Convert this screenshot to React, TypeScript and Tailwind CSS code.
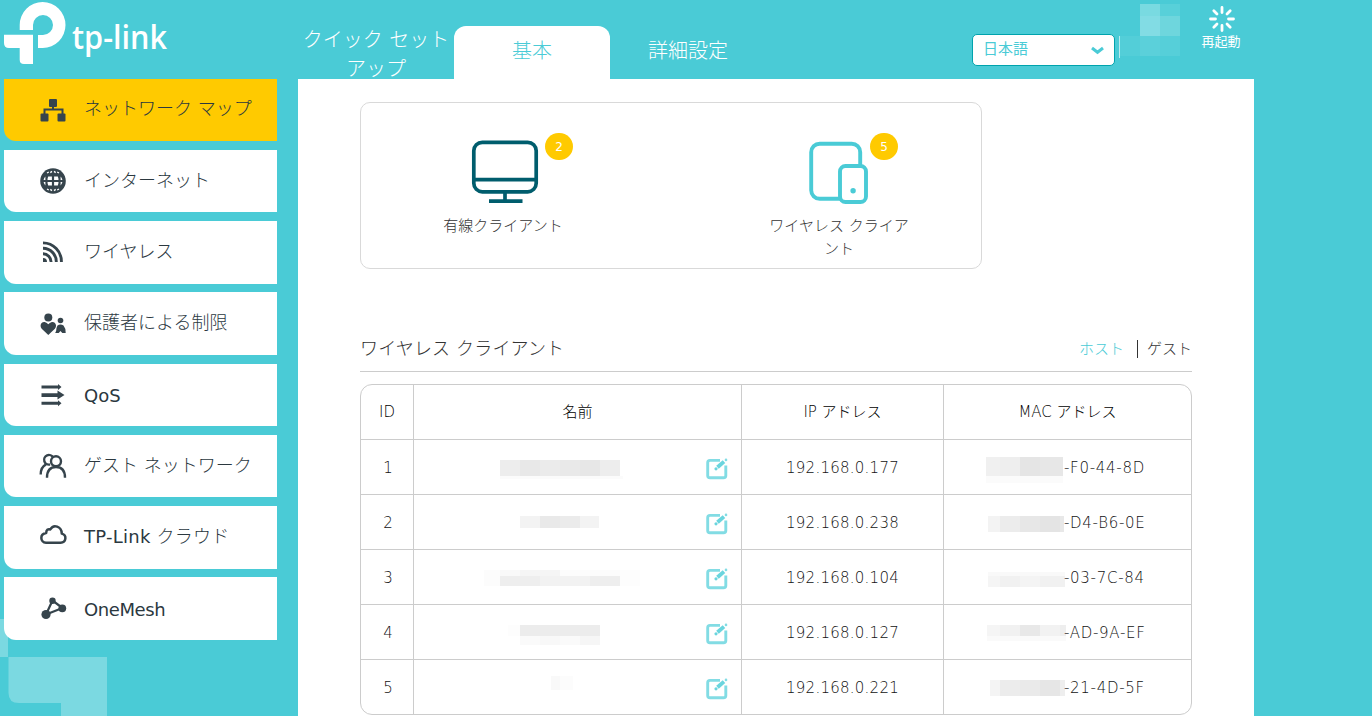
import type { ReactNode } from "react";

type Block = [x: number, y: number, w: number, h: number, fill: string];

const INK = "#36444c";

function Logo() {
  return (
    <svg width="200" height="79" viewBox="0 0 200 79" fill="#fff" className="overflow-visible" role="img" aria-label="tp-link">
      <path d="M19.700 30V25A22.900 23 0 1 1 42.700 48H38V35H43A10 10 0 1 0 33 25V30Z" />
      <path d="M4 34.700H33V64H24Q19.700 64 19.700 59.700V48H9Q4 48 4 43Z" />
      <text x="72" y="48.700" fontFamily="'Open Sans', sans-serif" fontWeight="600" fontSize="33" textLength="95" lengthAdjust="spacingAndGlyphs">
        tp-link
      </text>
    </svg>
  );
}

function MapIcon() {
  return (
    <svg width="28" height="28" viewBox="0 0 28 28" fill={INK}>
      <rect x="10" y="3" width="8" height="8" rx="1" />
      <rect x="1.500" y="17.500" width="8" height="8" rx="1" />
      <rect x="18.500" y="17.500" width="8" height="8" rx="1" />
      <path d="M5.500 18V13.500H23.500V18M14 10V14" fill="none" stroke={INK} strokeWidth="2" />
    </svg>
  );
}

function GlobeIcon() {
  return (
    <svg width="28" height="28" viewBox="0 0 28 28">
      <circle cx="14" cy="14" r="12.800" fill={INK} />
      <g fill="#fff">
        <path d="M12.900 9.600H9.200Q8.400 11.500 8.500 13H12.900ZM15.100 9.600H18.800Q19.600 11.500 19.500 13H15.100ZM12.900 18.400H9.200Q8.400 16.500 8.500 15H12.900ZM15.100 18.400H18.800Q19.600 16.500 19.500 15H15.100Z" />
        <path d="M6.400 9.600Q5 11 4.600 13H6.400ZM21.600 9.600Q23 11 23.400 13H21.600ZM6.400 18.400Q5 17 4.600 15H6.400ZM21.600 18.400Q23 17 23.400 15H21.600Z" />
        <path d="M8 6L9.800 5M11.300 5.600L13 4.400M15 4.400L16.700 5.600M18.200 5L20 6M8 22L9.800 23M11.300 22.400L13 23.600M15 23.600L16.700 22.400M18.200 23L20 22" fill="none" stroke="#fff" strokeWidth="1.300" />
      </g>
    </svg>
  );
}

function SignalIcon() {
  return (
    <svg width="28" height="28" viewBox="0 1.500 28 28" fill="none" stroke={INK} strokeWidth="2.900">
      <path d="M4 5.400A18.600 18.600 0 0 1 22.400 24.500M4 10.800A13.400 13.400 0 0 1 17.300 24.500M4 16.200A8.200 8.200 0 0 1 12.100 24.500" />
      <path d="M4 20.500A4 4 0 0 1 8 24.500H4Z" fill={INK} stroke="none" />
    </svg>
  );
}

function FamilyIcon() {
  return (
    <svg width="28" height="28" viewBox="0 -0.500 28 28" fill={INK}>
      <circle cx="9.300" cy="7" r="4" />
      <path d="M9.300 24.500L2.700 18.200C-.2 14.400 3 10.600 6.300 11.700Q7.800 12.200 9.300 13.700Q10.800 12.200 12.300 11.700C15.600 10.600 18.800 14.400 15.900 18.200Z" />
      <circle cx="21.500" cy="10" r="2.800" />
      <path d="M18.500 15Q21.500 12.800 24.500 15Q27 18 26.700 22.500H23.300L21.500 20.500L19.700 22.500H16.200Q17.500 20 17.500 17.500Z" />
    </svg>
  );
}

function QosIcon() {
  return (
    <svg width="28" height="28" viewBox="0 0 28 28" fill={INK}>
      <path d="M2.500 4.500H19V3L22.500 6L19 9V7.500H2.500Z" />
      <path d="M2.500 12.200H18.500V9.500L25.500 14L18.500 18.500V16H2.500Z" />
      <path d="M2.500 20.800H19V19.300L22.500 22.300L19 25.300V23.800H2.500Z" />
    </svg>
  );
}

function GuestIcon() {
  return (
    <svg width="28" height="28" viewBox="0 0 28 28" fill="none" stroke={INK} strokeWidth="2.400">
      <path d="M11 12.500A4.800 4.800 0 1 1 14.200 5.600" />
      <path d="M1.700 22.500Q1.700 15.200 7 12.400" />
      <circle cx="17" cy="9.300" r="5" />
      <path d="M8 25.700Q8 15 17 15Q26 15 26 25.700" />
    </svg>
  );
}

function CloudIcon() {
  return (
    <svg width="28" height="28" viewBox="0 3.500 28 28" className="overflow-visible" fill="none" stroke={INK} strokeWidth="2.500" strokeLinejoin="round">
      <path d="M7 22.300H21.500C27.500 22 28 14.500 22.800 13.100C22.500 5.800 14.500 3.200 11.300 9C9 8 7.200 9.700 7.200 12.400C.5 13.200 1 22 7 22.300Z" />
    </svg>
  );
}

function MeshIcon() {
  return (
    <svg width="28" height="28" viewBox="0 0.500 28 28" fill={INK}>
      <path d="M7 20L13.500 6L23.500 13.500Z" fill="none" stroke={INK} strokeWidth="2.200" />
      <circle cx="7" cy="20" r="4.600" />
      <circle cx="13.500" cy="6.200" r="3.200" />
      <circle cx="23.300" cy="13.800" r="3.900" />
    </svg>
  );
}

function MonitorIcon() {
  return (
    <svg width="68" height="64" viewBox="0 0 68 64" fill="none" stroke="#005d6d" strokeWidth="3.700">
      <rect x="2.800" y="2.300" width="62.400" height="49.500" rx="8.500" />
      <path d="M3 39.700H65M34 52V61M18 61.200H51.500" />
    </svg>
  );
}

function DevicesIcon() {
  return (
    <svg width="60" height="64" viewBox="0 0 60 64" fill="none" stroke="#4acbd6" strokeWidth="3.900">
      <rect x="2.200" y="3.700" width="49" height="55.100" rx="8.500" />
      <rect x="31" y="26" width="26" height="36" rx="5.500" fill="#fff" />
      <circle cx="44.100" cy="50.700" r="2.700" fill="#4acbd6" stroke="none" />
    </svg>
  );
}

function EditIcon() {
  return (
    <svg width="22" height="22" viewBox="0 0 22 22" fill="none" stroke="#82dce4" strokeWidth="2.900">
      <path d="M14 2.400H4Q1.700 2.400 1.700 4.700V17.500Q1.700 19.800 4 19.800H17.500Q19.800 19.800 19.800 17.500V7.500" />
      <path d="M11.500 9.300L18 3.600" stroke="#6ad5de" strokeWidth="3.900" />
      <circle cx="10" cy="10.800" r="1.600" fill="#6ad5de" stroke="none" />
      <circle cx="20" cy="1.900" r="1.300" fill="#82dce4" stroke="none" />
    </svg>
  );
}

function Blocks({ blocks, width, height }: { blocks: Block[]; width: number; height: number }) {
  return (
    <svg width={width} height={height} className="shrink-0" shapeRendering="crispEdges">
      {blocks.map(([x, y, w, h, fill], i) => (
        <rect key={i} x={x} y={y} width={w} height={h} fill={fill} />
      ))}
    </svg>
  );
}

interface NavItem {
  latin?: string;
  label?: string;
  icon: ReactNode;
  box: string;
  text: string;
}

const navItems: NavItem[] = [
  { label: "ネットワーク マップ", icon: <MapIcon />, box: "h-[62px] mb-[9px] bg-[#ffca00]", text: "pb-[3px]" },
  { label: "インターネット", icon: <GlobeIcon />, box: "h-[62px] mb-[9px] bg-white", text: "pb-[1px]" },
  { label: "ワイヤレス", icon: <SignalIcon />, box: "h-[63px] mb-[8px] bg-white", text: "pb-[2px]" },
  { label: "保護者による制限", icon: <FamilyIcon />, box: "h-[63px] mb-[9px] bg-white", text: "pb-[2px]" },
  { latin: "QoS", icon: <QosIcon />, box: "h-[62px] mb-[9px] bg-white", text: "pt-[1px]" },
  { label: "ゲスト ネットワーク", icon: <GuestIcon />, box: "h-[62px] mb-[9px] bg-white", text: "pb-[1px]" },
  { latin: "TP-Link", label: " クラウド", icon: <CloudIcon />, box: "h-[63px] mb-[8px] bg-white", text: "pb-[3px] tracking-[0.25px]" },
  { latin: "OneMesh", icon: <MeshIcon />, box: "h-[63px] bg-white", text: "pt-[1px] tracking-[-0.4px]" },
];

interface Client {
  id: number;
  ip: string;
  mac: string;
  name: Block[];
  prefix: Block[];
}

const clients: Client[] = [
  {
    id: 1,
    ip: "192.168.0.177",
    mac: "-F0-44-8D",
    name: [
      [86, 20, 20, 16, "#ededed"], [106, 20, 20, 16, "#e8e8e8"], [126, 20, 20, 16, "#ebebeb"],
      [146, 20, 20, 16, "#e9e9e9"], [166, 20, 20, 16, "#e7e7e7"], [186, 20, 20, 16, "#ededed"],
      [86, 36, 123, 3, "#fbfbfb"],
    ],
    prefix: [
      [0, 17, 14, 19, "#f0f0f0"], [14, 17, 20, 19, "#eeeeee"], [34, 17, 20, 19, "#e5e5e5"],
      [54, 17, 23, 19, "#e7e7e7"], [0, 36, 77, 7, "#fbfbfb"],
    ],
  },
  {
    id: 2,
    ip: "192.168.0.238",
    mac: "-D4-B6-0E",
    name: [[106, 21, 20, 12, "#f3f3f3"], [126, 21, 20, 12, "#e9e9e9"], [146, 21, 20, 12, "#ebebeb"], [166, 21, 19, 12, "#f3f3f3"]],
    prefix: [[2, 21, 12, 16, "#f3f3f3"], [14, 21, 20, 16, "#ececec"], [34, 21, 20, 16, "#e7e7e7"], [54, 21, 20, 16, "#e4e4e4"], [74, 21, 4, 16, "#e8e8e8"]],
  },
  {
    id: 3,
    ip: "192.168.0.104",
    mac: "-03-7C-84",
    name: [
      [70, 20, 16, 16, "#fcfcfc"], [86, 20, 20, 6, "#f9f9f9"], [106, 20, 40, 6, "#f5f5f5"],
      [146, 20, 60, 6, "#fcfcfc"], [86, 26, 40, 10, "#eeeeee"], [126, 26, 50, 10, "#f2f2f2"],
      [176, 26, 30, 10, "#eeeeee"], [206, 20, 20, 16, "#fdfdfd"],
    ],
    prefix: [[2, 22, 77, 4, "#f9f9f9"], [2, 26, 12, 11, "#f5f5f5"], [14, 26, 20, 11, "#f1f1f1"], [34, 26, 20, 11, "#f4f4f4"], [54, 26, 25, 11, "#f1f1f1"]],
  },
  {
    id: 4,
    ip: "192.168.0.127",
    mac: "-AD-9A-EF",
    name: [[94, 20, 12, 11, "#fdfdfd"], [106, 20, 80, 11, "#ececec"], [106, 31, 20, 9, "#fafafa"], [126, 31, 20, 9, "#f8f8f8"], [146, 31, 20, 9, "#fafafa"], [166, 31, 20, 9, "#f6f6f6"]],
    prefix: [[1, 20, 13, 11, "#f5f5f5"], [14, 20, 20, 11, "#f1f1f1"], [34, 20, 20, 11, "#e8e8e8"], [54, 20, 20, 11, "#f2f2f2"], [74, 20, 6, 11, "#eeeeee"], [1, 31, 79, 5, "#fafafa"]],
  },
  {
    id: 5,
    ip: "192.168.0.221",
    mac: "-21-4D-5F",
    name: [[137, 16, 9, 14, "#f9f9f9"], [146, 16, 13, 14, "#fcfcfc"]],
    prefix: [[4, 20, 10, 16, "#f4f4f4"], [14, 20, 20, 16, "#ececec"], [34, 20, 20, 16, "#eaeaea"], [54, 20, 20, 16, "#e6e6e6"], [74, 20, 5, 16, "#eeeeee"]],
  },
];

const headerBlocks: Block[] = [
  [21, 4, 20, 12, "#79dae1"], [41, 4, 20, 12, "#58d0d9"],
  [21, 16, 20, 20, "#82dce4"], [41, 16, 20, 20, "#6ed6dd"],
  [0, 36, 21, 20, "#53ced8"], [21, 36, 20, 20, "#5bd0da"], [41, 36, 20, 20, "#56cfd9"],
  [0, 36, 1, 22, "#b8eaef"],
];

function Header() {
  return (
    <header className="flex h-[79px] w-[1254px] shrink-0">
      <div className="w-[298px]">
        <Logo />
      </div>
      <nav className="flex flex-1 items-end text-center text-[20px]">
        <a className="h-[54px] w-[156px] pt-[1px] leading-[29px] text-white">
          クイック セット<br />アップ
        </a>
        <a className="h-[53px] w-[156px] rounded-t-[12px] bg-white leading-[50px] text-[#4acbd6]">基本</a>
        <a className="h-[53px] w-[156px] leading-[50px] text-white">詳細設定</a>
      </nav>
      <button className="mt-[34px] flex h-[32px] w-[143px] items-center justify-between rounded-[5px] border border-[#00a3ad] bg-white pr-[10px] pl-[10px] text-[15px] font-normal text-[#4acbd6]">
        <span className="pb-[2px]">日本語</span>
        <svg width="13" height="9" viewBox="0 0 13 9" fill="none" stroke="#4acbd6" strokeWidth="3">
          <path d="M1 2L6.500 6.300L12 2" />
        </svg>
      </button>
      <div className="ml-[4px] w-[61px]">
        <Blocks blocks={headerBlocks} width={61} height={60} />
      </div>
      <button className="mr-[12px] ml-[22px] flex w-[40px] flex-col items-center text-[13px] font-normal text-white">
        <svg width="26" height="26" viewBox="0 0 26 26" className="mt-[6px]" fill="none" stroke="#fff" strokeWidth="2.800" strokeLinecap="round">
          <path d="M13 1.500V6.500M13 19.500V24.500M1.500 13H6.500M19.500 13H24.500M4.800 4.800L8 8M18 18L21.200 21.200M4.800 21.200L8 18M18 8L21.200 4.800" />
        </svg>
        <span className="mr-[2px] leading-[20px] whitespace-nowrap">再起動</span>
      </button>
    </header>
  );
}

function Badge({ children, place }: { children: ReactNode; place: string }) {
  return (
    <span className={`absolute flex h-[27px] w-[28px] items-center justify-center rounded-full bg-[#ffca00] text-[12px] font-normal text-white ${place}`}>
      {children}
    </span>
  );
}

export default function App() {
  return (
    <div className="relative flex h-[716px] w-[1372px] flex-col overflow-hidden bg-[#4acbd6] font-['DejaVu_Sans','Noto_Sans_CJK_JP',sans-serif] font-light">
      <svg className="absolute bottom-0 left-0" width="110" height="100" viewBox="0 0 110 100" fill="#7bd9e1">
        <path d="M0 3H8V41H0ZM8.500 41H107V100H61V87H19Q8.500 87 8.500 77Z" />
      </svg>
      <Header />
      <div className="relative flex flex-1">
        <aside className="mr-[21px] ml-[4px] w-[273px]">
          {navItems.map((item, i) => (
            <a key={i} className={`flex items-center rounded-bl-[12px] pl-[35px] text-[18px] text-[#2b383f] ${item.box}`}>
              {item.icon}
              <span className={`ml-[17px] whitespace-pre ${item.text}`}>
                {item.latin && <span className="font-normal">{item.latin}</span>}
                {item.label}
              </span>
            </a>
          ))}
        </aside>
        <main className="w-[956px] bg-white px-[62px] pt-[23px] text-[15px] text-[#333]">
          <section className="flex h-[167px] w-[622px] rounded-[10px] border border-[#d9d9d9] pt-[37px]">
            <div className="flex w-[288px] flex-col items-center">
              <div className="relative">
                <MonitorIcon />
                <Badge place="-top-[7px] -right-[34px]">2</Badge>
              </div>
              <p className="mt-[11px] mr-[4px] leading-[23px]">有線クライアント</p>
            </div>
            <div className="ml-[108px] flex w-[164px] flex-col items-center">
              <div className="relative">
                <DevicesIcon />
                <Badge place="-top-[7px] -right-[29px]">5</Badge>
              </div>
              <p className="mt-[11px] text-center leading-[23px] whitespace-nowrap">
                ワイヤレス クライア<br />ント
              </p>
            </div>
          </section>
          <div className="mt-[59px] flex h-[44px] justify-between border-b border-[#cccccc]">
            <h2 className="text-[18px] leading-[42px] tracking-[0.15px]">ワイヤレス クライアント</h2>
            <div className="flex items-center">
              <a className="text-[#4acbd6]">ホスト</a>
              <span className="mr-[9px] mb-[2px] ml-[13px] h-[18px] w-px bg-[#333]" />
              <a>ゲスト</a>
            </div>
          </div>
          <div className="mt-[12px] w-[832px] overflow-hidden rounded-[12px] border border-[#cccccc]">
            <div className="grid h-[55px] grid-cols-[53px_328px_202px_247px] border-b border-[#cccccc] text-center leading-[55px] text-black">
              <div className="border-r border-[#cccccc]">ID</div>
              <div className="border-r border-[#cccccc]">名前</div>
              <div className="border-r border-[#cccccc]">IP アドレス</div>
              <div>MAC アドレス</div>
            </div>
            {clients.map((c) => (
              <div key={c.id} className="grid h-[55px] grid-cols-[53px_328px_202px_247px] border-b border-[#cccccc] text-center leading-[56px] text-[#111] last:h-[54px] last:border-b-0">
                <div className="h-[54px] border-r border-[#cccccc] pl-[2px]">{c.id}</div>
                <div className="flex h-[54px] items-center border-r border-[#cccccc]">
                  <Blocks blocks={c.name} width={292} height={54} />
                  <span className="flex pt-[4px]">
                    <EditIcon />
                  </span>
                </div>
                <div className="h-[54px] border-r border-[#cccccc] tracking-[0.25px]">{c.ip}</div>
                <div className="flex h-[54px] pl-[42px]">
                  <Blocks blocks={c.prefix} width={80} height={54} />
                  <span className="-ml-[2px] tracking-[0.7px]">{c.mac}</span>
                </div>
              </div>
            ))}
          </div>
        </main>
      </div>
    </div>
  );
}
